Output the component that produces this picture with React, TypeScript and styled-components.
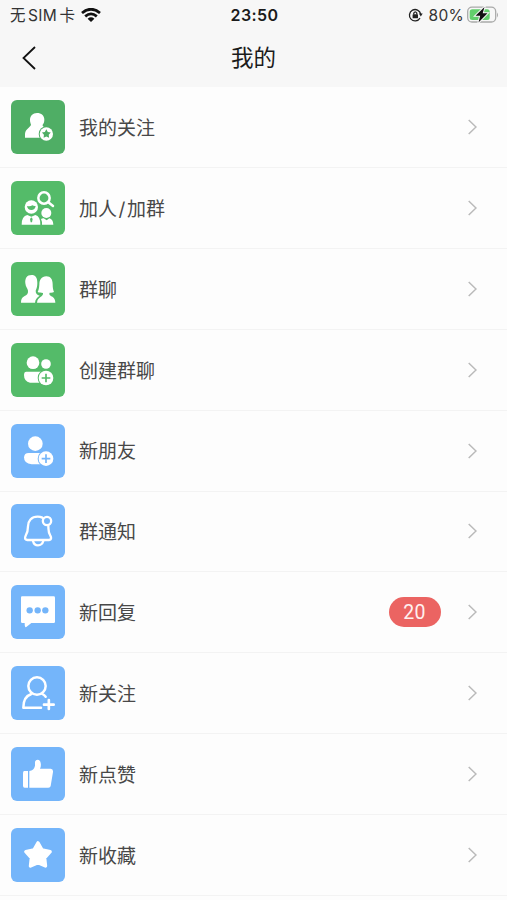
import React from 'react';
import styled, { createGlobalStyle } from 'styled-components';

const GlobalStyle = createGlobalStyle`
  * { box-sizing: border-box; }
  body {
    margin: 0;
    background: #fdfdfd;
    font-family: Inter, "Noto Sans CJK SC", sans-serif;
    color: #484848;
  }
`;

const GREEN = '#54bb69';
const DEEP_GREEN = '#4fae65';
const BLUE = '#74b5fa';

const Screen = styled.main`
  width: 507px;
  height: 900px;
  overflow: hidden;
  display: flex;
  flex-direction: column;
`;

const Header = styled.header`
  flex: none;
  height: 87.3px;
  background: #f7f7f7;
  color: #1b1b1b;
`;

const StatusBar = styled.div`
  display: grid;
  grid-template-columns: 1fr auto 1fr;
  align-items: center;
  height: 30px;
  padding: 0 8px 0 10px;
  font-size: 16px;
  line-height: 20px;
`;

const Carrier = styled.div`
  display: flex;
  align-items: center;
  gap: 6px;
  color: #333;
`;

const CarrierText = styled.span`
  display: flex;
  gap: 2.5px;
  padding-top: 1px;
  font-size: 15.5px;
`;

const Latin = styled.span`
  letter-spacing: 0.3px;
`;

const Clock = styled.div`
  font-size: 16px;
  font-weight: 600;
  letter-spacing: 0.4px;
`;

const Power = styled.div`
  display: flex;
  align-items: center;
  justify-content: flex-end;
  color: #333;
`;

const Percent = styled.span`
  margin: 0 3px 0 6px;
  padding-top: 1px;
  font-size: 15.5px;
  letter-spacing: 0.3px;
`;

const NavBar = styled.div`
  display: grid;
  grid-template-columns: 60px 1fr 60px;
  align-items: center;
  height: 56px;
`;

const BackButton = styled.button`
  display: flex;
  padding: 0 0 0 20px;
  border: 0;
  background: none;
`;

const Title = styled.h1`
  margin: 0;
  text-align: center;
  font-size: 22.5px;
  line-height: 30px;
  font-weight: 400;
`;

const List = styled.ul`
  flex: none;
  margin: 0;
  padding: 0;
  list-style: none;
`;

const Row = styled.li`
  display: flex;
  align-items: center;
  height: 80.85px;
  padding: 0 30.5px 0 11px;
  border-bottom: 1px solid #f3f3f3;
`;

const Tile = styled.div<{ $color: string }>`
  flex: none;
  width: 54px;
  height: 54px;
  border-radius: 6px;
  background: ${(p) => p.$color};
  color: ${(p) => p.$color};
`;

const Glyph = styled.svg`
  display: block;
  width: 54px;
  height: 54px;
`;

const Label = styled.span`
  flex: 1;
  display: flex;
  margin-left: 14px;
  padding-top: 3.6px;
  font-size: 19px;
  line-height: 28px;
`;

const Slash = styled.span`
  margin: 0 1.5px;
`;

const Badge = styled.span`
  display: flex;
  align-items: center;
  justify-content: center;
  width: 52px;
  height: 30px;
  margin-right: 27px;
  border-radius: 15px;
  background: #eb6462;
  color: #fff0ef;
  font-family: Roboto, sans-serif;
  font-size: 19.5px;
  letter-spacing: 0.3px;
`;

const star = (cx: number, cy: number, r: number, inner: number) =>
  Array.from({ length: 10 }, (_, i) => {
    const radius = i % 2 ? inner : r;
    const a = (Math.PI * i) / 5 - Math.PI / 2;
    return `${cx + radius * Math.cos(a)},${cy + radius * Math.sin(a)}`;
  }).join(' ');

const PlusBadge = ({ x, y }: { x: number; y: number }) => (
  <>
    <circle cx={x} cy={y} r="25" fill="currentColor" />
    <circle cx={x} cy={y} r="22" fill="#fff" />
    <path d={`M${x - 13} ${y}h26M${x} ${y - 13}v26`} stroke="currentColor" strokeWidth="5" />
  </>
);

const FollowingIcon = () => (
  <>
    <path
      fill="#fff"
      d="M78 39C65 39 57 48 57 60C57 66 59 70 60 74C58 82 44 86 42 101V113H103V82C97 80 94 78 95 74C98 70 100 66 100 59C100 47 91 39 78 39Z"
    />
    <circle cx="106" cy="102" r="23" fill="currentColor" />
    <circle cx="106" cy="102" r="20" fill="#fff" />
    <polygon points={star(106, 102, 14, 7.5)} fill="currentColor" />
  </>
);

const SearchPeopleIcon = () => (
  <>
    <circle cx="99" cy="51" r="17" fill="none" stroke="#fff" strokeWidth="7.500" />
    <path d="M112 64l14 11" stroke="#fff" strokeWidth="7.500" strokeLinecap="round" />
    <circle cx="61" cy="78" r="20" fill="#fff" />
    <path d="M48 75Q58 77 64 73Q69 76 74 75Q72 87 61 87Q50 87 48 75Z" fill="currentColor" />
    <path d="M32 131Q32 105 49 102L61 107L73 102Q88 105 88 131Z" fill="#fff" />
    <path d="M61 109L65 114L63 124H59L57 114Z" fill="currentColor" />
    <circle cx="106" cy="96" r="15" fill="#fff" />
    <path d="M93 131Q94 122 90 114Q95 111 98 112L107 118L115 112Q126 114 127 131Z" fill="#fff" />
  </>
);

const GroupIcon = () => (
  <g fill="#fff">
    <path d="M62 39C47 39 42 49 43 64C44 75 50 80 51 86C52 95 47 99 41 102C32 106 30 113 30 122H72C73 111 79 105 86 101C78 98 74 95 74 86C77 79 79 73 79 62C79 47 73 39 62 39Z" />
    <path d="M106 43C91 43 85 54 85 68C84 79 83 84 80 90C85 93 90 92 96 93C98 105 80 103 78 122H133C133 109 126 105 120 102C115 99 114 96 116 92C121 93 126 92 129 90C126 84 125 77 125 67C125 52 119 43 106 43Z" />
  </g>
);

const CreateGroupIcon = () => (
  <>
    <circle cx="66" cy="59" r="19" fill="#fff" />
    <circle cx="105" cy="63" r="14.500" fill="#fff" />
    <path d="M46 86H112V119H57Q39 115 39 96Q39 86 46 86Z" fill="#fff" />
    <PlusBadge x={105} y={105} />
  </>
);

const NewFriendIcon = () => (
  <>
    <circle cx="73" cy="59" r="22" fill="#fff" />
    <path d="M53 87H105V121H62Q39 119 39 100Q40 87 53 87Z" fill="#fff" />
    <PlusBadge x={105} y={104} />
  </>
);

const BellIcon = () => (
  <g fill="none" stroke="#fff" strokeWidth="7" strokeLinecap="round" strokeLinejoin="round">
    <path d="M94 41Q88 38 80 38C61 38 51 51 51 67C51 80 50 86 44 95C40 103 42 107 49 108H114C121 107 122 102 118 95C111 85 113 77 112 67" />
    <circle cx="108" cy="51" r="12.500" />
    <path d="M66 111Q69 124 81 124Q93 124 97 111" />
  </g>
);

const ReplyIcon = () => (
  <>
    <path d="M33 34H128Q132 34 132 38V110Q132 114 128 114H61L45 127Q41 128 41 114H34Q30 114 30 110V38Q30 34 33 34Z" fill="#fff" />
    <g fill="currentColor">
      <circle cx="56" cy="76" r="9.500" />
      <circle cx="80" cy="76" r="9.500" />
      <circle cx="103" cy="76" r="9.500" />
    </g>
  </>
);

const NewFollowerIcon = () => (
  <g fill="none" stroke="#fff" strokeWidth="7.500" strokeLinecap="round" strokeLinejoin="round">
    <circle cx="78" cy="60" r="26" />
    <path d="M90 125H37Q37 92 61 84M94 84Q100 87 104 92" />
    <path d="M99 116H128M113.500 102V129" strokeWidth="8" />
  </g>
);

const ThumbIcon = () => (
  <g fill="#fff">
    <path d="M39 72H51V122H41Q36 122 36 116V79Q36 73 39 72Z" />
    <path d="M55 122V72Q69 70 72 56V44Q74 38 80 38Q88 39 89 48Q91 57 87 65H119Q127 66 126 75L119 117Q118 122 112 122Z" />
  </g>
);

const StarIcon = () => (
  <polygon points={star(81, 83, 38.5, 21)} fill="#fff" stroke="#fff" strokeWidth="10" strokeLinejoin="round" />
);

type Item = { label: React.ReactNode; id: string; color: string; Icon: React.FC; count?: number };

const items: Item[] = [
  { id: 'following', label: '我的关注', color: DEEP_GREEN, Icon: FollowingIcon },
  { id: 'add', label: <>加人<Slash>/</Slash>加群</>, color: GREEN, Icon: SearchPeopleIcon },
  { id: 'groups', label: '群聊', color: GREEN, Icon: GroupIcon },
  { id: 'create', label: '创建群聊', color: GREEN, Icon: CreateGroupIcon },
  { id: 'friends', label: '新朋友', color: BLUE, Icon: NewFriendIcon },
  { id: 'notices', label: '群通知', color: BLUE, Icon: BellIcon },
  { id: 'replies', label: '新回复', color: BLUE, Icon: ReplyIcon, count: 20 },
  { id: 'followers', label: '新关注', color: BLUE, Icon: NewFollowerIcon },
  { id: 'likes', label: '新点赞', color: BLUE, Icon: ThumbIcon },
  { id: 'favorites', label: '新收藏', color: BLUE, Icon: StarIcon },
];

const Wifi = () => (
  <svg width="20" height="14" viewBox="0 0 20 14" fill="none" stroke="#111" strokeWidth="2.800">
    <path d="M1 5Q10 -2.500 19 5" />
    <path d="M4.200 8.300Q10 3.500 15.800 8.300" />
    <path d="M10 14L6.600 10.700Q10 8 13.400 10.700Z" fill="#111" stroke="none" />
  </svg>
);

const RotationLock = () => (
  <svg width="15" height="14" viewBox="0 0 15 14" fill="none" stroke="#222" strokeWidth="1.300">
    <path d="M12 10.200A5.700 5.700 0 1 1 12.700 6" />
    <path d="M10.900 5.600H14.700L12.800 8.400Z" fill="#222" stroke="none" />
    <rect x="4.600" y="6.300" width="5.400" height="4" rx="0.600" fill="#222" stroke="none" />
    <path d="M5.800 6.500V5Q7.300 2.600 8.800 5V6.500" />
  </svg>
);

const Battery = () => (
  <svg width="32" height="18" viewBox="0 0 32 18">
    <rect x="0.700" y="1.200" width="28" height="14.800" rx="4.300" fill="none" stroke="#a9aaa9" strokeWidth="1.300" />
    <path d="M30 6.500Q32 9 30 11.500Z" fill="#a9aaa9" />
    <rect x="2.700" y="3.200" width="20" height="10.800" rx="2.500" fill="#62cf6c" />
    <path d="M17.500 1L8.500 9.800H13.200L11.500 16.500L20.500 7.300H15.700Z" fill="#111" stroke="#f7f7f7" strokeWidth="2" paintOrder="stroke" />
  </svg>
);

const Chevron = () => (
  <svg width="9" height="16" viewBox="0 0 9 16" fill="none" stroke="#bababa" strokeWidth="1.500">
    <path d="M0.700 1L8 8L0.700 15" />
  </svg>
);

export default function App() {
  return (
    <>
      <GlobalStyle />
      <Screen>
        <Header>
          <StatusBar>
            <Carrier>
              <CarrierText>
                <span>无</span>
                <Latin>SIM</Latin>
                <span>卡</span>
              </CarrierText>
              <Wifi />
            </Carrier>
            <Clock>23:50</Clock>
            <Power>
              <RotationLock />
              <Percent>80%</Percent>
              <Battery />
            </Power>
          </StatusBar>
          <NavBar>
            <BackButton aria-label="返回">
              <svg width="16" height="24" viewBox="0 0 16 24" fill="none" stroke="#111" strokeWidth="1.800">
                <path d="M15 1L3.500 12L15 23" />
              </svg>
            </BackButton>
            <Title>我的</Title>
          </NavBar>
        </Header>
        <List>
          {items.map(({ id, label, color, Icon, count }) => (
            <Row key={id}>
              <Tile $color={color}>
                <Glyph viewBox="0 0 162 162">
                  <Icon />
                </Glyph>
              </Tile>
              <Label>{label}</Label>
              {count !== undefined && <Badge>{count}</Badge>}
              <Chevron />
            </Row>
          ))}
        </List>
      </Screen>
    </>
  );
}
